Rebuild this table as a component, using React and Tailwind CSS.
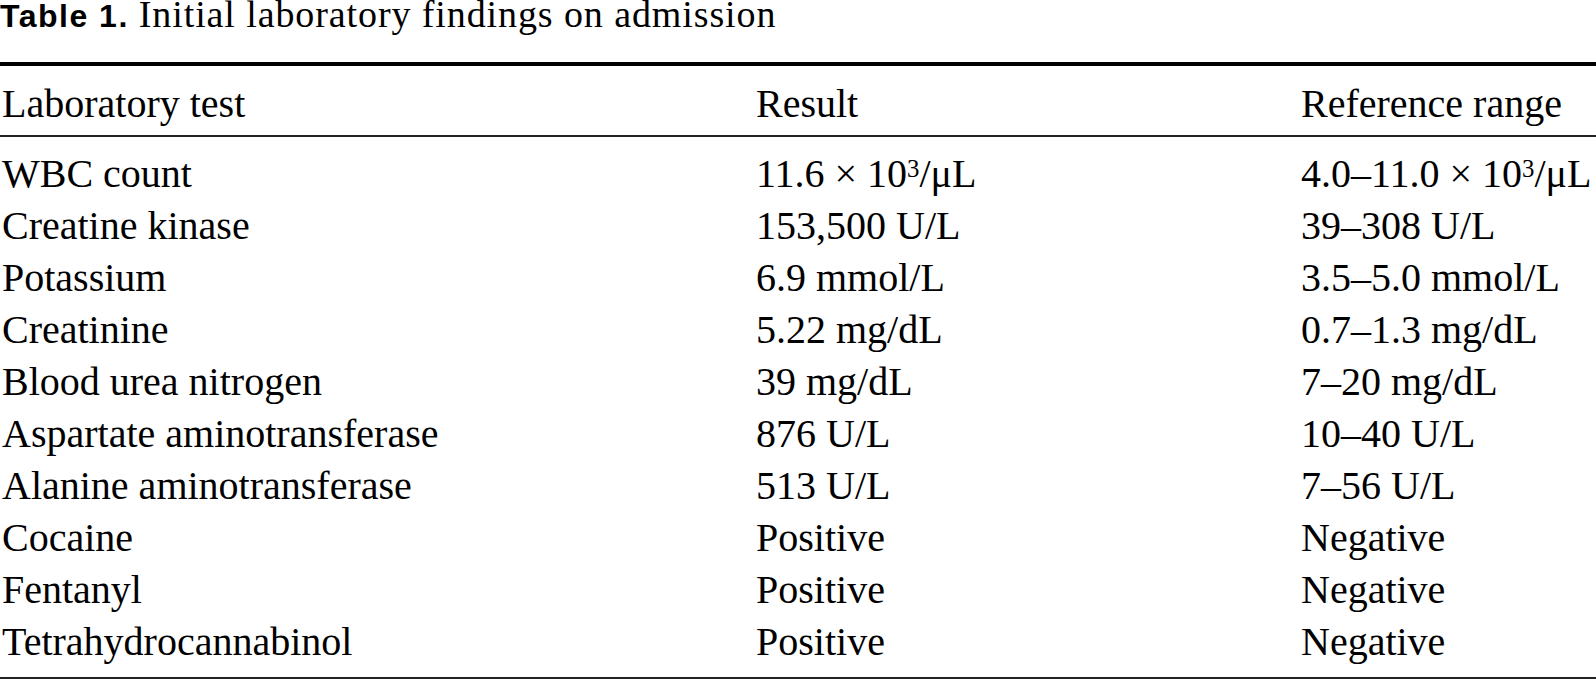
const Sup = () => <sup className="text-[0.62em] relative -top-[0.42em] align-baseline">3</sup>

const rows = [
  ['WBC count', <>11.6 × 10<Sup />/μL</>, <>4.0–11.0 × 10<Sup />/μL</>],
  ['Creatine kinase', '153,500 U/L', '39–308 U/L'],
  ['Potassium', '6.9 mmol/L', '3.5–5.0 mmol/L'],
  ['Creatinine', '5.22 mg/dL', '0.7–1.3 mg/dL'],
  ['Blood urea nitrogen', '39 mg/dL', '7–20 mg/dL'],
  ['Aspartate aminotransferase', '876 U/L', '10–40 U/L'],
  ['Alanine aminotransferase', '513 U/L', '7–56 U/L'],
  ['Cocaine', 'Positive', 'Negative'],
  ['Fentanyl', 'Positive', 'Negative'],
  ['Tetrahydrocannabinol', 'Positive', 'Negative'],
]

function Row({ cells }) {
  return (
    <div className="grid grid-cols-[754px_545px_1fr] leading-[52px] whitespace-nowrap">
      {cells.map((c, i) => (
        <div key={i}>{c}</div>
      ))}
    </div>
  )
}

export default function App() {
  return (
    <div className="w-[1596px] h-[682px] bg-white text-black overflow-hidden font-['Liberation_Serif','Times_New_Roman',serif]">
      {/* Caption */}
      <div className="h-[28px] text-[38px] leading-[28px] whitespace-nowrap">
        <span className="font-['Liberation_Sans',Arial,sans-serif] font-bold text-[32px] tracking-[1.5px]">Table 1.</span>
        <span className="ml-[10px] tracking-[0.9px]">Initial laboratory findings on admission</span>
      </div>

      <div className="mt-[34px] border-t-4 border-black" />

      {/* Header */}
      <div className="pl-[2px] mt-[12px] text-[40px]">
        <Row cells={['Laboratory test', 'Result', 'Reference range']} />
      </div>

      <div className="mt-[5px] border-t-2 border-[#222]" />

      {/* Body */}
      <div className="pl-[2px] mt-[11px] text-[40px]">
        {rows.map((r, i) => (
          <Row key={i} cells={r} />
        ))}
      </div>

      <div className="mt-[9px] border-t-2 border-[#222]" />
    </div>
  )
}
